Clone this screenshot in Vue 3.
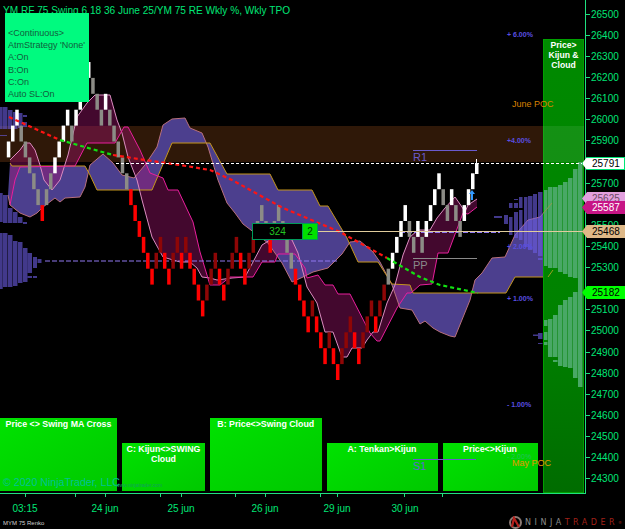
<script setup>
// renko bricks: one row number per column, kinds W white, G grey, R red, D dark red
const rows = [5,4,3,4,5,6,7,8,9,8,7,6,5,4,3,4,3,2,1,0,1,2,3,2,3,4,5,6,7,8,9,10,11,12,13,12,11,12,13,12,11,12,11,12,13,14,15,14,13,12,13,14,13,12,11,12,13,12,11,10,9,10,11,10,9,10,11,12,13,14,15,16,15,16,17,18,17,18,19,18,17,16,17,18,17,16,15,16,15,14,13,12,11,10,9,10,11,10,11,10,9,8,7,8,9,8,9,10,9,8,7]
const kinds = 'WWWGGGGGRGGWWWWGWWWWGGGWGGGGGRRRRRRDDRRDDRDRRRRDDDRRDDDRRDDGGGRGGGGGRRRRDRRRDRRDDDRRDDDRDDGWWWWGGWGWWWWGGWGGWWW'
const bricks = rows.map((row, i) => ({
  x: 6.8 + 4.22 * i,
  y: 62 + 15.9 * row,
  kind: kinds[i],
}))

const goldLine = [[10,163],[12,166],[85,166],[90,175],[97,190],[152,190],[172,143],[210,143],[227,174],[270,174],[278,190],[312,190],[320,206],[328,206],[347,238],[358,262],[378,262],[392,284],[410,285],[413,293],[506,293],[515,277],[548,277],[553,270]]
const salmonLine = [[8,195],[10,205],[20,213],[30,217],[37,213],[43,207],[55,198],[60,202],[65,198],[80,197],[85,187],[90,165],[103,154],[113,163],[122,175],[134,178],[145,165],[157,147],[163,125],[172,119],[185,118],[190,128],[202,133],[208,147],[218,180],[227,203],[235,213],[243,224],[268,243],[282,263],[292,282],[303,277],[313,272],[328,268],[342,254],[350,242],[360,241],[373,252],[380,262],[392,285],[400,308],[412,310],[420,324],[425,321],[433,328],[440,332],[450,336],[455,337],[470,300],[475,280],[482,273],[492,258],[505,257],[515,235],[528,220],[540,217],[552,203]]
const paleLine = [[10,160],[20,150],[25,143],[30,143],[35,150],[40,165],[44,180],[52,190],[60,180],[68,155],[77,117],[87,103],[95,95],[110,95],[117,120],[122,133],[128,157],[137,180],[142,200],[152,237],[163,257],[180,262],[190,262],[197,268],[202,277],[210,278],[217,280],[232,278],[245,277],[253,262],[262,245],[270,240],[283,235],[292,240],[298,253],[307,287],[317,303],[325,332],[333,332],[342,357],[347,357],[352,348],[362,348],[367,340],[373,332],[378,332],[387,303],[395,285],[403,255],[410,237],[418,230],[430,230],[437,218],[445,208],[455,197],[462,207],[465,212],[468,205],[477,199]]
const pinkLine = [[10,205],[15,180],[20,167],[75,166],[87,143],[115,143],[124,127],[128,127],[140,150],[150,173],[163,178],[168,190],[178,190],[193,222],[200,252],[210,285],[220,285],[230,277],[253,277],[262,262],[275,262],[278,254],[295,254],[305,268],[307,278],[318,275],[325,285],[333,285],[338,294],[350,294],[370,333],[377,341],[380,341],[397,308],[407,293],[411,293],[420,285],[432,284],[438,253],[448,253],[463,213],[468,214],[477,207]]

const toPoints = (line) => line.map((p) => p.join(',')).join(' ')
const fillPoints = (a, b) => toPoints([...a, ...[...b].reverse()])

// price average, red while above, green while below
const redParts = [
  [[9,117],[60,140]],
  [[113,155],[145,160],[180,165],[210,170],[232,180],[283,208],[340,232],[387,258]],
]
const greenParts = [
  [[60,140],[113,155]],
  [[387,258],[420,277],[440,285],[478,293]],
]

// volume stripes [x, width, top, bottom]
const profile = [
  [0,2.7,107,129],[3,4.5,107,129],[8,4.5,110,129],[13,4.5,112,129],[18,4.5,113,128],[23,4,115,117],[23,4,122,127],[0,7,135,136],
  [0,2.7,193,222],[3,4.5,195,223],[8,4.5,208,223],[13,4.5,212,223],[18,4.5,217,223],[23,4,222,224],
  [0,2.7,233,289],[3,4.5,233,287],[8,4.5,235,287],[13,4.5,241,286],[18,4.5,242,283],[23,4.5,248,282],[27.5,4.5,253,273],[27.5,4.5,276,278],[33,4,257,268],[33,4,276,278],[37.5,4,259,263],
  [494,8,216,218],[504,4,215,224],[509,3.5,203,208],[509,3.5,217,235],[514,4,199,200],[514,4,203,208],[514,4,212,238],[519,3.5,197,208],[519,3.5,210,240],[524,3.5,197,247],[528,4.5,196,250],[533,4,194,253],[538,4.5,192,256],[538,4.5,258,260],
  [533,5,334.5,336],[538,4.5,333,339],[538,4.5,343,344],
]
const columnProfile = [
  [544,3.5,190,266],[548,4.5,187,268],[553,4.5,187,268],[558,4.5,185,272],[563,4.5,182,274],[568,4.5,178,277],[573,4.5,169,278],[578,4.5,162,284],
  [544,3.5,320,326],[544,3.5,332,340],[544,3.5,342,345],[548,4.5,319,357],[553,4.5,315,357],[553,4.5,360,362],[558,4.5,305,366],[563,4.5,300,367],[568,4.5,297,368],[573,4.5,292,378],[578,4.5,284,387],
]

const percentLabels = [
  { text: '+ 6.00%', y: 37 },
  { text: '+4.00%', y: 143 },
  { text: '+ 2.00%', y: 249 },
  { text: '+ 1.00%', y: 301 },
  { text: '- 1.00%', y: 407 },
]

const signals = [
  { lines: ['Price <> Swing MA Cross'], width: 117, tall: true },
  { lines: ['C: Kijun<>SWING', 'Cloud'], width: 83, tall: false },
  { lines: ['B: Price<>Swing Cloud'], width: 111.5, tall: true },
  { lines: ['A: Tenkan>Kijun'], width: 111, tall: false },
  { lines: ['Price<>Kijun'], width: 95, tall: false },
]

// these three sit fully behind a flag on the real chart
const coveredPrices = [25800, 25600, 25200]
const prices = []
for (let p = 26500; p >= 24300; p -= 100) prices.push(p)

const flags = [
  { text: '25625', top: 192, cls: 'flag-plum' },
  { text: '25587', top: 201, cls: 'flag-magenta' },
  { text: '25468', top: 225, cls: 'flag-tan' },
  { text: '25182', top: 286, cls: 'flag-lime' },
  { text: '25791', top: 157, cls: 'flag-white' },
]

const timeTicks = [25, 75, 105, 160, 181, 235, 265, 320, 337, 404, 442]
const timeLabels = [
  { text: '03:15', x: 25 },
  { text: '24 jun', x: 105 },
  { text: '25 jun', x: 181 },
  { text: '26 jun', x: 265 },
  { text: '29 jun', x: 337 },
  { text: '30 jun', x: 405 },
]
</script>

<template>
  <div class="screen">
    <div class="chart-row">
      <div class="plot">
        <svg class="plot-svg" width="585" height="493" viewBox="0 0 585 493">
          <rect x="0" y="126" width="543" height="36" fill="#2f1808" />

          <polygon :points="fillPoints(goldLine, salmonLine)" fill="#4c3f8e" />
          <polygon :points="fillPoints(pinkLine, paleLine)" fill="#a0146e" fill-opacity="0.42" />
          <polyline :points="toPoints(salmonLine)" class="line" stroke="#b8707c" />
          <polyline :points="toPoints(goldLine)" class="line" stroke="#c4951c" />
          <polyline :points="toPoints(paleLine)" class="line" stroke="#dc8cc0" />
          <polyline :points="toPoints(pinkLine)" class="line" stroke="#e81f9c" />

          <rect v-for="(s, i) in profile" :key="'p' + i" :x="s[0]" :y="s[2]" :width="s[1]" :height="s[3] - s[2]" fill="#6a5ce0" fill-opacity="0.62" />

          <line x1="45" y1="261" x2="338" y2="261" stroke="#8f78f0" stroke-width="1.2" stroke-dasharray="5 2" />
          <line x1="400" y1="232.5" x2="500" y2="232.5" stroke="#8f78f0" stroke-width="1.2" stroke-dasharray="5 2" />

          <rect v-for="(b, i) in bricks" :key="'b' + i" :x="b.x" :y="b.y" width="3.5" height="15.9" :class="'brick-' + b.kind" />
          <line x1="476.5" y1="159" x2="476.5" y2="164" stroke="#fff" />
          <rect x="475" y="163" width="3.5" height="11" fill="#fff" />

          <polyline v-for="(part, i) in redParts" :key="'r' + i" :points="toPoints(part)" class="avg" stroke="#ff1414" />
          <polyline v-for="(part, i) in greenParts" :key="'g' + i" :points="toPoints(part)" class="avg" stroke="#12e012" />

          <path d="M472 190 l-3 4 h2 v6 h2 v-6 h2 z" fill="#3399ff" />

          <line x1="413" y1="150.5" x2="477" y2="150.5" stroke="#6a5acd" />
          <text x="413" y="161" class="pivot" fill="#6a5acd">R1</text>
          <line x1="413" y1="258.5" x2="477" y2="258.5" stroke="#8a8a8a" />
          <text x="413" y="269" class="pivot" fill="#8a8a8a">PP</text>

          <text v-for="p in percentLabels" :key="p.text" x="507" :y="p.y" class="percent">{{ p.text }}</text>
        </svg>

        <div class="title">YM RF 75 Swing 6 18 36 June 25/YM 75 RE Wkly %, Wkly TPO</div>

        <div class="atm-box">
          <span>&lt;Continuous&gt;</span>
          <span>AtmStrategy 'None'</span>
          <span>A:On</span>
          <span>B:On</span>
          <span>C:On</span>
          <span>Auto SL:On</span>
        </div>

        <div class="signal-column">
          <svg class="column-svg" width="41" height="454" viewBox="543 39 41 454">
            <rect x="543" y="126" width="41" height="36" fill="#fff" fill-opacity="0.08" />
            <rect v-for="(s, i) in columnProfile" :key="'c' + i" :x="s[0]" :y="s[2]" :width="s[1]" :height="s[3] - s[2]" fill="#49a866" />
            <polyline :points="toPoints(salmonLine.slice(-2))" class="line" stroke="#8f9a50" />
            <polyline :points="toPoints(goldLine.slice(-2))" class="line" stroke="#9aa020" />
          </svg>
          <span class="column-text">Price&gt;<br />Kijun &amp;<br />Cloud</span>
        </div>

        <div class="price-line white-line"></div>
        <div class="price-line tan-line"></div>

        <div class="order-tag">
          <span class="order-qty">324</span>
          <span class="order-count">2</span>
        </div>

        <div class="signals">
          <div v-for="s in signals" :key="s.lines[0]" class="signal" :class="{ tall: s.tall }" :style="{ width: s.width + 'px' }">
            <span v-for="line in s.lines" :key="line">{{ line }}</span>
          </div>
        </div>

        <div class="copyright">© 2020 NinjaTrader, LLC</div>
        <div class="watermark">www.ninjatrader.com</div>
        <svg class="over-svg" width="585" height="493" viewBox="0 0 585 493">
          <text x="512" y="107" class="poc">June POC</text>
          <line x1="413" y1="459.5" x2="476" y2="459.5" stroke="#6a5acd" />
          <text x="413" y="470" class="pivot" fill="#5f6ad0">S1</text>
          <text x="507" y="459" class="percent faint">- 2.00%</text>
          <text x="512" y="466" class="poc may">May POC</text>
        </svg>
      </div>

      <div class="price-axis">
        <div v-for="p in prices" :key="p" class="price-row">
          <i class="tick"></i>
          <span v-if="!coveredPrices.includes(p)">{{ p }}</span>
        </div>
        <div v-for="f in flags" :key="f.text" class="flag" :class="f.cls" :style="{ top: f.top + 'px' }">
          <span>{{ f.text }}</span>
        </div>
      </div>
    </div>

    <div class="bottom">
      <svg class="time-svg" width="585" height="22" viewBox="0 0 585 22">
        <line v-for="t in timeTicks" :key="t" :x1="t + 0.5" y1="0" :x2="t + 0.5" y2="3" stroke="#1fe07f" />
        <text v-for="t in timeLabels" :key="t.text" :x="t.x" y="18" class="time-label">{{ t.text }}</text>
      </svg>
      <div class="footer">
        <span class="instrument">MYM 75 Renko</span>
        <div class="logo">
          <svg width="15" height="13" viewBox="0 0 15 13">
            <circle cx="7.5" cy="6.5" r="5.5" fill="none" stroke="#8c7a74" stroke-width="2" />
            <path d="M4 11 L6 2 L11 11" fill="none" stroke="#b5201c" stroke-width="2.2" />
          </svg>
          <span class="logo-ninja">NINJA</span><span class="logo-trader">TRADER</span><span class="logo-mark">®</span>
        </div>
      </div>
    </div>
  </div>
</template>

<style scoped>
.screen {
  width: 625px;
  height: 529px;
  background: #000;
  overflow: hidden;
  font-family: "Liberation Sans", Arial, sans-serif;
}
.chart-row {
  display: flex;
  height: 494px;
}
.plot {
  position: relative;
  width: 585px;
  height: 493px;
  border-right: 1px solid #1fe07f;
  border-bottom: 1px solid #1fe07f;
  overflow: hidden;
}
.plot-svg,
.over-svg {
  position: absolute;
  left: 0;
  top: 0;
}
.over-svg {
  pointer-events: none;
}
.line {
  fill: none;
  stroke-width: 1;
}
.avg {
  fill: none;
  stroke-width: 2.2;
  stroke-dasharray: 4 3;
}
.brick-W { fill: #fff; }
.brick-G { fill: #8c8c86; }
.brick-R { fill: #ff0000; }
.brick-D { fill: #8e0606; }
.pivot {
  font-size: 11px;
}
.percent {
  font-size: 7px;
  font-weight: 700;
  fill: #5a4fe0;
}
.percent.faint {
  fill: #25c060;
  font-weight: 400;
}
.poc {
  font-size: 9px;
  fill: #d98200;
}
.poc.may {
  fill: #e29a00;
}
.title {
  position: absolute;
  left: 3px;
  top: 4px;
  font-size: 10.1px;
  line-height: 13px;
  color: #00e676;
  white-space: nowrap;
}
.atm-box {
  position: absolute;
  left: 5px;
  top: 13px;
  width: 84px;
  height: 89px;
  box-sizing: border-box;
  padding: 14px 0 0 3px;
  background: #00fa7f;
  color: #11603c;
  font-size: 9px;
  line-height: 12.2px;
  display: flex;
  flex-direction: column;
  white-space: nowrap;
}
.signal-column {
  position: absolute;
  left: 543px;
  top: 39px;
  width: 41px;
  height: 454px;
  background: linear-gradient(#008a00, #008200 60%, #006c00);
  box-shadow: inset 0 0 0 1px #00a000;
}
.column-svg {
  position: absolute;
  left: 0;
  top: 0;
}
.column-text {
  position: relative;
  display: block;
  padding-top: 1px;
  text-align: center;
  font-size: 8.6px;
  font-weight: 700;
  line-height: 10px;
  color: #fff;
}
.price-line {
  position: absolute;
  height: 1px;
}
.white-line {
  left: 116px;
  right: 3px;
  top: 163px;
  background: repeating-linear-gradient(90deg, #fff 0 3px, transparent 3px 5px);
}
.tan-line {
  left: 318px;
  right: 0;
  top: 231px;
  background: #e0cc9c;
}
.order-tag {
  position: absolute;
  left: 252px;
  top: 223px;
  width: 66px;
  height: 17px;
  display: flex;
  font-size: 10px;
  line-height: 15px;
  text-align: center;
}
.order-qty {
  flex: 1;
  background: #000;
  color: #23c423;
  border: 1px solid #009a5a;
}
.order-count {
  width: 14px;
  background: #00e000;
  color: #03300a;
  border: 1px solid #009a5a;
  border-left: 0;
}
.signals {
  position: absolute;
  left: 0;
  bottom: 2px;
  height: 73px;
  display: flex;
  align-items: flex-end;
  gap: 5px;
}
.signal {
  height: 48px;
  display: flex;
  flex-direction: column;
  text-align: center;
  padding-top: 1px;
  box-sizing: border-box;
  background: linear-gradient(150deg, #00e200, #00c800);
  color: #fff;
  font-size: 8.8px;
  font-weight: 700;
  line-height: 10px;
}
.signal.tall {
  height: 73px;
}
.copyright {
  position: absolute;
  left: 3px;
  top: 476px;
  font-size: 10.6px;
  line-height: 12px;
  color: #00c296;
  white-space: nowrap;
}
.watermark {
  position: absolute;
  left: 116px;
  top: 482px;
  font-size: 5px;
  line-height: 7px;
  color: #12a060;
  white-space: nowrap;
}
.price-axis {
  position: relative;
  width: 39px;
  padding-top: 3.5px;
  box-sizing: border-box;
}
.price-row {
  height: 21.136px;
  display: flex;
  align-items: center;
  gap: 1px;
  font-size: 10px;
  color: #00e676;
}
.tick {
  width: 4px;
  height: 1px;
  background: #1fe07f;
}
.flag {
  position: absolute;
  left: -4px;
  width: 43px;
  height: 13px;
  box-sizing: border-box;
  padding-left: 10px;
  font-size: 10px;
  line-height: 13px;
  clip-path: polygon(0 50%, 5px 0, 100% 0, 100% 100%, 5px 100%);
}
.flag-white { background: #fff; color: #000; box-shadow: inset 0 0 0 1px #00e676; }
.flag-plum { background: #e2a0de; color: #6a4a66; }
.flag-magenta { background: #c71585; color: #fff; }
.flag-tan { background: #deb887; color: #000; }
.flag-lime { background: #00ff00; color: #000; }
.bottom {
  position: relative;
}
.time-svg {
  display: block;
}
.time-label {
  font-size: 10px;
  fill: #00e676;
  text-anchor: middle;
}
.footer {
  display: flex;
  justify-content: space-between;
  align-items: center;
  height: 13px;
  padding: 0 3px 0 3px;
}
.instrument {
  font-size: 6px;
  color: #d0d0d0;
}
.logo {
  display: flex;
  align-items: center;
  font-family: "DejaVu Sans", sans-serif;
  font-size: 8px;
  letter-spacing: 3.5px;
  line-height: 13px;
}
.logo svg {
  margin-right: 2px;
}
.logo-ninja { color: #8a8a8a; }
.logo-trader { color: #a02018; }
.logo-mark { color: #a02018; font-size: 4px; letter-spacing: 0; }
</style>

<style>
html, body {
  background: #000;
}
</style>
